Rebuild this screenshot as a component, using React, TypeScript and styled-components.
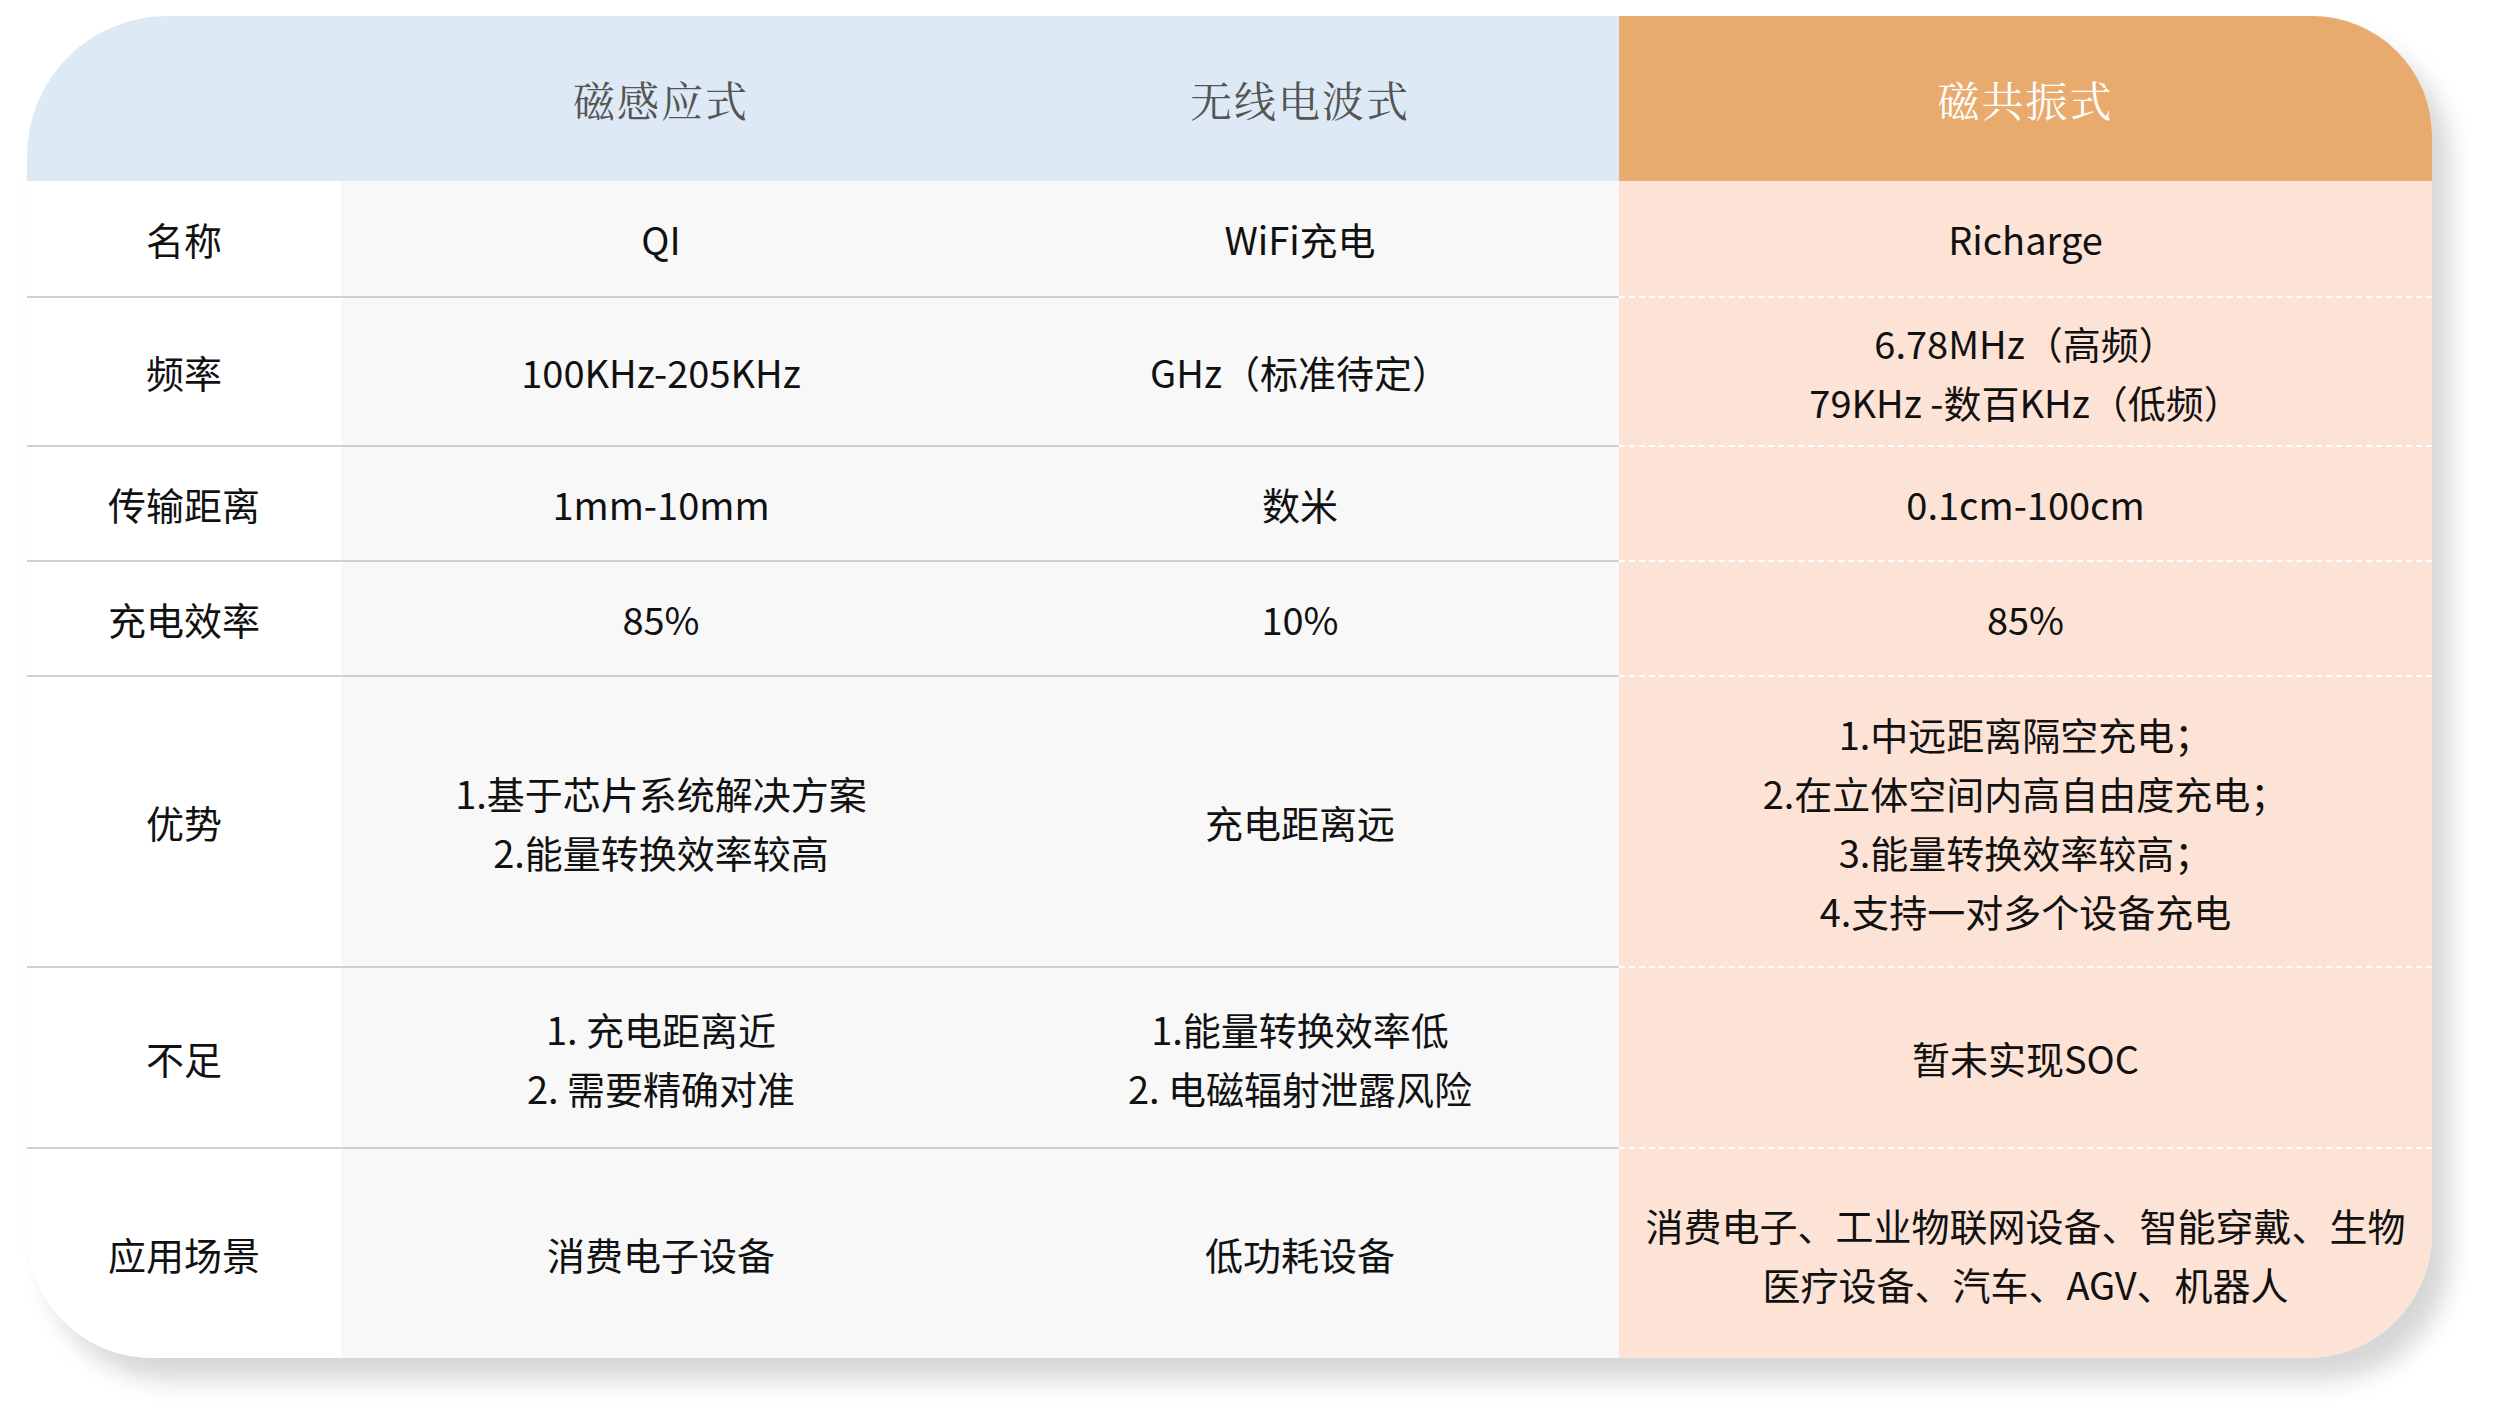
import React from 'react';
import styled, { createGlobalStyle } from 'styled-components';

const Global = createGlobalStyle`
  html, body { margin: 0; padding: 0; background: #fff; }
  body { font-family: 'Noto Sans CJK SC', 'Noto Sans', sans-serif; }
`;

type Row = { label: string; h: number; cells: string[][] };

const rows: Row[] = [
  { label: '名称', h: 117, cells: [['QI'], ['WiFi充电'], ['Richarge']] },
  { label: '频率', h: 149, cells: [['100KHz-205KHz'], ['GHz（标准待定）'], ['6.78MHz（高频）', '79KHz -数百KHz（低频）']] },
  { label: '传输距离', h: 115, cells: [['1mm-10mm'], ['数米'], ['0.1cm-100cm']] },
  { label: '充电效率', h: 115, cells: [['85%'], ['10%'], ['85%']] },
  {
    label: '优势',
    h: 291,
    cells: [
      ['1.基于芯片系统解决方案', '2.能量转换效率较高'],
      ['充电距离远'],
      ['1.中远距离隔空充电；', '2.在立体空间内高自由度充电；', '3.能量转换效率较高；', '4.支持一对多个设备充电'],
    ],
  },
  { label: '不足', h: 181, cells: [['1. 充电距离近', '2. 需要精确对准'], ['1.能量转换效率低', '2. 电磁辐射泄露风险'], ['暂未实现SOC']] },
  { label: '应用场景', h: 209, cells: [['消费电子设备'], ['低功耗设备'], ['消费电子、工业物联网设备、智能穿戴、生物医疗设备、汽车、AGV、机器人']] },
];

export default function App() {
  return (
    <>
      <Global />
      <Page>
        <Card>
          <Head />
          <Head>磁感应式</Head>
          <Head>无线电波式</Head>
          <Head $accent>磁共振式</Head>
          {rows.map((r, i) => {
            const last = i === rows.length - 1;
            return (
              <React.Fragment key={r.label}>
                <Label $h={r.h} $last={last}>{r.label}</Label>
                {r.cells.map((c, j) => (
                  <Cell key={j} $h={r.h} $last={last} $accent={j === 2}>
                    {c.map((line) => (
                      <div key={line}>{line}</div>
                    ))}
                  </Cell>
                ))}
              </React.Fragment>
            );
          })}
        </Card>
      </Page>
    </>
  );
}

const Page = styled.div`
  width: 2496px;
  height: 1414px;
  padding: 16px 0 0 27px;
  box-sizing: border-box;
`;

const Card = styled.div`
  width: 2405px;
  display: grid;
  grid-template-columns: 314px 640px 638px 813px;
  border-radius: 140px 120px 125px 125px;
  overflow: hidden;
  box-shadow: 18px 22px 24px rgba(0, 0, 0, 0.16);
`;

const Head = styled.div<{ $accent?: boolean }>`
  height: 165px;
  display: flex;
  align-items: center;
  justify-content: center;
  background: ${(p) => (p.$accent ? '#e8aa6d' : '#dde9f5')};
  color: ${(p) => (p.$accent ? '#fff' : '#555')};
  font-family: 'Noto Serif CJK SC', 'Liberation Serif', serif;
  font-size: 42px;
  letter-spacing: 2px;
`;

const Label = styled.div<{ $h: number; $last: boolean }>`
  height: ${(p) => p.$h}px;
  box-sizing: border-box;
  display: flex;
  align-items: center;
  justify-content: center;
  background: #fff;
  color: #111;
  font-size: 38px;
  border-bottom: ${(p) => (p.$last ? 'none' : '2px solid #d0d0d0')};
`;

const Cell = styled.div<{ $h: number; $last: boolean; $accent: boolean }>`
  height: ${(p) => p.$h}px;
  box-sizing: border-box;
  display: flex;
  flex-direction: column;
  align-items: center;
  justify-content: center;
  text-align: center;
  padding: 0 14px;
  background: ${(p) => (p.$accent ? '#fde3d6' : '#f8f8f8')};
  color: #111;
  font-size: 38px;
  line-height: 59px;
  border-bottom: ${(p) => (p.$last ? 'none' : p.$accent ? '2px dashed #fff' : '2px solid #d0d0d0')};
`;
